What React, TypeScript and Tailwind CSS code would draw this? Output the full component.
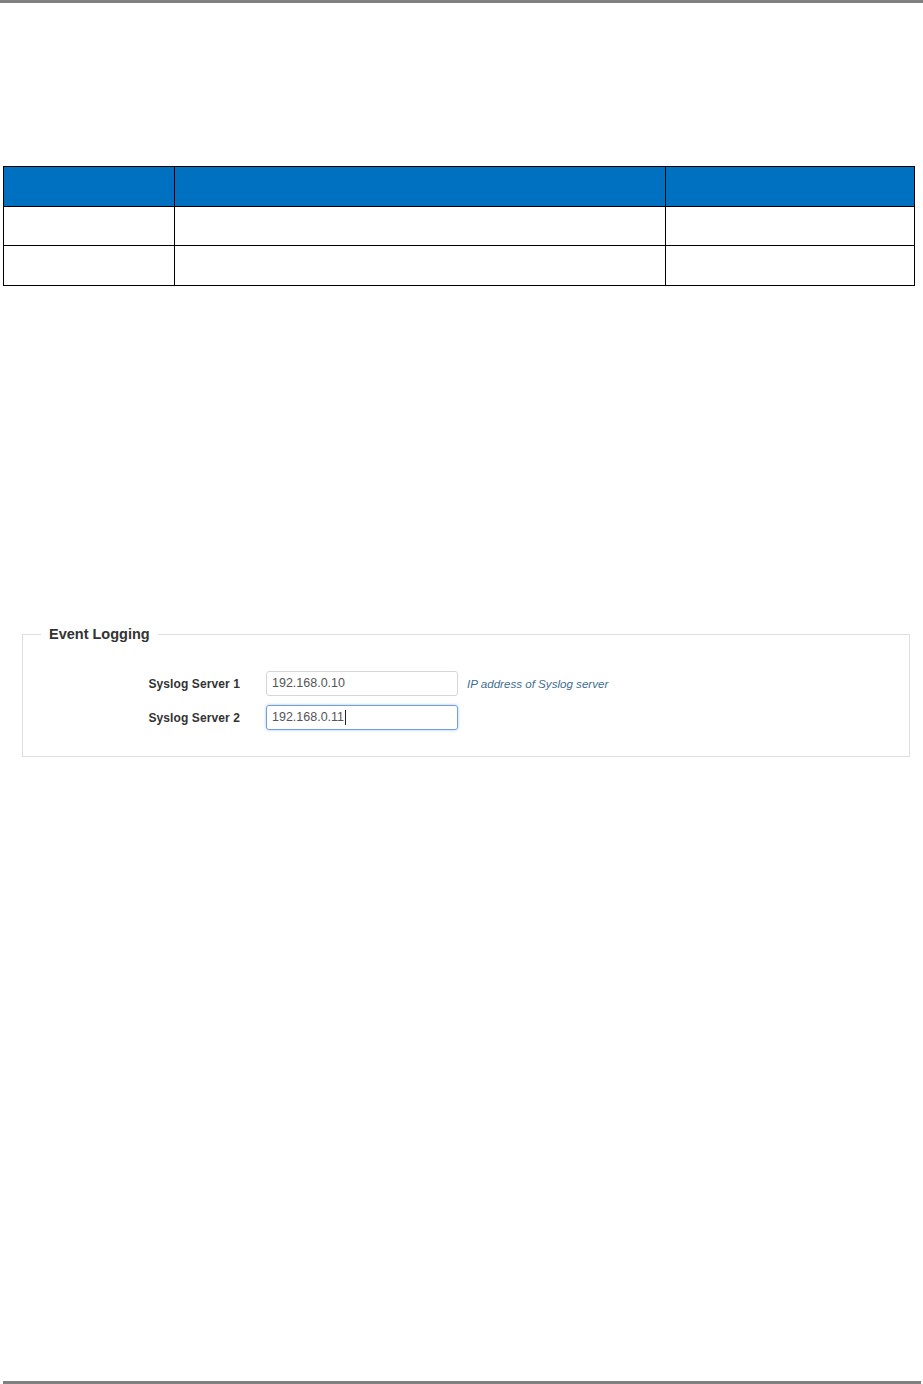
import React from 'react';

const cols = ['w-[171px]', 'w-[491px]', 'w-[249px]'];

const TableGrid: React.FC = () => (
  <table className="ml-[3px] w-[911px] table-fixed border-collapse">
    <thead>
      <tr className="h-[40px] bg-[#0070c0]">
        {cols.map((c, i) => (
          <th key={i} className={`${c} border border-black`}></th>
        ))}
      </tr>
    </thead>
    <tbody>
      <tr className="h-[39px]">
        {cols.map((c, i) => (
          <td key={i} className={`${c} border border-black`}></td>
        ))}
      </tr>
      <tr className="h-[40px]">
        {cols.map((c, i) => (
          <td key={i} className={`${c} border border-black`}></td>
        ))}
      </tr>
    </tbody>
  </table>
);

interface FieldProps {
  label: string;
  value: string;
  focused?: boolean;
  help?: string;
}

const Field: React.FC<FieldProps> = ({ label, value, focused, help }) => (
  <div className="flex items-center">
    <div className="w-[217px] text-right text-[12px] font-bold tracking-[0.1px] text-[#333]">{label}</div>
    <div
      className={`ml-[26px] flex h-[25px] w-[192px] items-center rounded-[3px] border px-[5px] text-[12.5px] text-[#555] ${
        focused ? 'border-[#6f9fe0] shadow-[0_0_3px_rgba(102,150,233,0.6)]' : 'border-[#d6d6d6]'
      }`}
    >
      <span>{value}</span>
      {focused && <span className="ml-[1px] inline-block h-[15px] w-px bg-[#222]" />}
    </div>
    {help && <div className="ml-[9px] text-[11.6px] italic text-[#3e6d8e]">{help}</div>}
  </div>
);

export default function App() {
  return (
    <div className="flex h-[1384px] flex-col bg-white" style={{ fontFamily: '"Liberation Sans", Arial, sans-serif' }}>
      <div className="h-[3px] w-full bg-[#808080]" />
      <div className="mt-[163px]">
        <TableGrid />
      </div>

      <fieldset className="ml-[22px] mt-[339px] w-[888px] border border-[#dedede] px-0 pb-[26px]">
        <legend className="ml-[18px] px-[8px] text-[14.5px] font-bold leading-[18px] text-[#333]">Event Logging</legend>
        <div className="flex flex-col gap-[9px] pt-[28px]">
          <Field label="Syslog Server 1" value="192.168.0.10" help="IP address of Syslog server" />
          <Field label="Syslog Server 2" value="192.168.0.11" focused />
        </div>
      </fieldset>

      <div className="mt-auto ml-[3px] mr-[2px] h-[3px] bg-[#808080]" />
    </div>
  );
}
